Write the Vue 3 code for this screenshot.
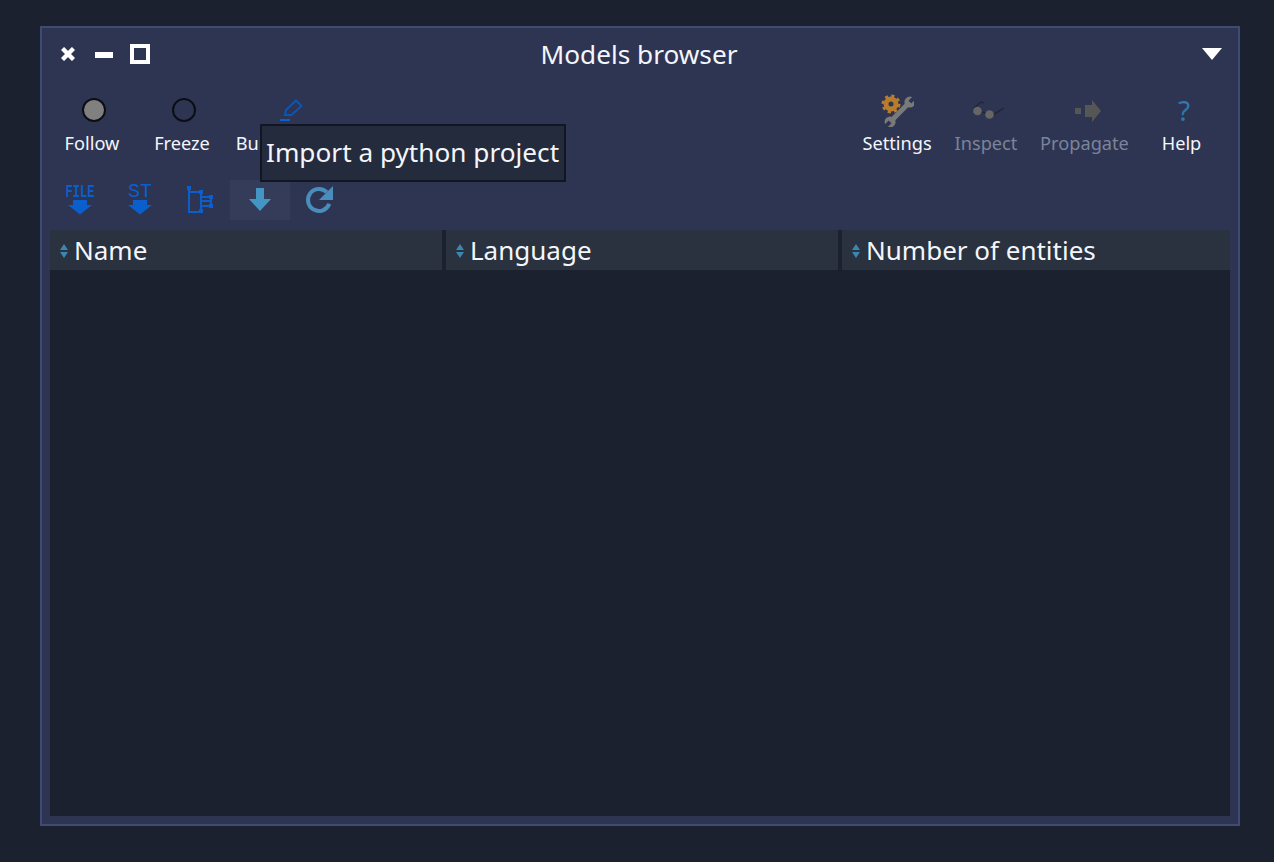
<script setup>
const columns = ['Name', 'Language', 'Number of entities']
</script>

<template>
  <div class="page">
    <section class="window">
      <header class="titlebar">
        <div class="win-controls">
          <svg class="ctl-close" width="14" height="14" viewBox="0 0 14 14"><path d="M1.5 1.5 L12.5 12.5 M12.5 1.5 L1.5 12.5" stroke="#fff" stroke-width="4.4" /></svg>
          <span class="ctl-min"></span>
          <span class="ctl-max"></span>
        </div>
        <h1 class="title">Models browser</h1>
        <span class="ctl-menu"></span>
      </header>

      <div class="toolbar">
        <div class="group">
          <button class="tool w90">
            <span class="ico"><span class="dot dot-grey"></span></span>
            <span class="lbl">Follow</span>
          </button>
          <button class="tool w90">
            <span class="ico"><span class="dot"></span></span>
            <span class="lbl">Freeze</span>
          </button>
          <button class="tool w128">
            <span class="ico pen">
              <svg width="24" height="24" viewBox="0 0 24 24" fill="none">
                <path d="M5 17 L6 12 L16 2.5 L21.5 8 L11.5 17 Z" stroke="#0b55b4" stroke-width="2" />
                <path d="M0 22 H10" stroke="#0a60cc" stroke-width="2" />
              </svg>
            </span>
            <span class="lbl lbl-build">Build model</span>
          </button>
        </div>
        <div class="group">
          <button class="tool w92">
            <span class="ico">
              <svg width="34" height="34" viewBox="0 0 34 34" fill="none">
                <g transform="rotate(-45 20 19)">
                  <rect x="6" y="16.5" width="28" height="5" fill="#7a7a7a" />
                  <circle cx="6" cy="19" r="5.5" fill="#7a7a7a" />
                  <circle cx="34" cy="19" r="5.5" fill="#7a7a7a" />
                  <rect x="0" y="17" width="6" height="4" fill="#2e3553" />
                  <rect x="34" y="17" width="7" height="4" fill="#2e3553" />
                </g>
                <circle cx="11" cy="11" r="5" stroke="#b97b2c" stroke-width="5" />
                <circle cx="11" cy="11" r="8" stroke="#b97b2c" stroke-width="3" stroke-dasharray="3.14 3.14" />
              </svg>
            </span>
            <span class="lbl">Settings</span>
          </button>
          <button class="tool w86 off">
            <span class="ico">
              <svg width="36" height="24" viewBox="0 0 36 24" fill="none">
                <path d="M6 10 L13 4 L16 5 M13 14 L18 15 M25 17 L36 10" stroke="#222836" stroke-width="1.5" />
                <circle cx="9.5" cy="13" r="4.3" fill="#666" />
                <circle cx="21.5" cy="16.5" r="4.3" fill="#666" />
              </svg>
            </span>
            <span class="lbl">Inspect</span>
          </button>
          <button class="tool w111 off">
            <span class="ico">
              <svg width="32" height="24" viewBox="0 0 32 24">
                <path d="M6 10 H12 V16 H6 Z M16 7 H23 V2 L32 13 L23 24 V19 H16 Z" fill="#565656" />
              </svg>
            </span>
            <span class="lbl">Propagate</span>
          </button>
          <button class="tool w83">
            <span class="ico q">?</span>
            <span class="lbl">Help</span>
          </button>
        </div>
      </div>

      <div class="actions">
        <button class="act">
          <svg class="over" width="34" height="34" viewBox="0 0 34 34">
            <text x="17" y="14" text-anchor="middle" class="ico-text" textLength="29" lengthAdjust="spacingAndGlyphs">FILE</text>
            <path d="M10 17 H24 V22 H29 L17 31.5 L5 22 H10 Z" fill="#0a5fcc" />
          </svg>
        </button>
        <button class="act">
          <svg class="over" width="34" height="34" viewBox="0 0 34 34">
            <text x="17" y="14" text-anchor="middle" class="ico-text thin" textLength="24" lengthAdjust="spacing">ST</text>
            <path d="M10 17 H24 V22 H29 L17 31.5 L5 22 H10 Z" fill="#0a5fcc" />
          </svg>
        </button>
        <button class="act">
          <svg width="30" height="30" viewBox="0 0 30 30" fill="none">
            <path d="M4 3 V27 H16 M4 7 H16 V26 M16 16 H26 M16 12 H26 V21 H16" stroke="#0a5fcc" stroke-width="2" />
            <path d="M2 1 H6 V5 H2 Z M14 5 H18 V9 H14 Z M14 24 H18 V28 H14 Z M24 10 H28 V14 H24 Z M24 19 H28 V23 H24 Z" fill="#0a5fcc" />
          </svg>
        </button>
        <button class="act hover">
          <svg width="24" height="26" viewBox="0 0 24 26">
            <path d="M8 1 H16 V12 H23 L12 24 L1 12 H8 Z" fill="#4396c4" />
          </svg>
        </button>
        <button class="act">
          <svg width="32" height="32" viewBox="0 0 32 32" fill="none">
            <path d="M22.8 8.2 A11 11 0 1 0 25.3 19.8" stroke="#4a8dbd" stroke-width="4" />
            <path d="M15 16 L29 2 V16 Z" fill="#4a8dbd" />
          </svg>
        </button>
      </div>

      <div class="table">
        <div class="thead">
          <div v-for="col in columns" :key="col" class="th">
            <span class="sort"><i class="up"></i><i class="down"></i></span>
            <span>{{ col }}</span>
          </div>
        </div>
      </div>

      <div class="tooltip">Import a python project</div>
    </section>
  </div>
</template>

<style>
html, body { margin: 0; background: #1b212f; }
</style>

<style scoped>
.page {
  width: 1274px;
  height: 862px;
  box-sizing: border-box;
  padding: 26px 34px 36px 40px;
  background: #1b212f;
  font-family: "Noto Sans", sans-serif;
  color: #f4f6fb;
}
.window {
  position: relative;
  height: 100%;
  box-sizing: border-box;
  border: 2px solid #3f4a75;
  background: #2e3553;
  padding: 0 8px 8px;
  display: flex;
  flex-direction: column;
}
.titlebar {
  height: 54px;
  flex: none;
  position: relative;
  display: flex;
  align-items: center;
  justify-content: space-between;
}
.win-controls { display: flex; align-items: center; margin-left: 11px; }
.ctl-close { display: block; margin-top: -2px; }
.ctl-min { width: 18px; height: 6px; background: #fff; margin-left: 20px; }
.ctl-max {
  width: 20px; height: 20px; box-sizing: border-box;
  border: 4px solid #fff; margin-left: 17px; margin-top: -2px;
}
.title {
  position: absolute;
  left: 0; right: 0; top: 0; margin: 0;
  line-height: 52px;
  text-align: center;
  font-size: 26.2px;
  font-weight: 400;
  transform: translateX(-1px);
}
.ctl-menu {
  width: 0; height: 0;
  border-left: 10px solid transparent;
  border-right: 10px solid transparent;
  border-top: 12px solid #fff;
  margin-right: 8px;
  margin-top: -2px;
}
.toolbar {
  height: 98px;
  flex: none;
  display: flex;
  justify-content: space-between;
  margin: 0 -3px;
}
.group { display: flex; }
.group:last-child { margin-right: 10px; }
button {
  font: inherit; color: inherit; background: none; border: 0; padding: 0; margin: 0;
}
.tool {
  display: flex;
  flex-direction: column;
  align-items: center;
  height: 80px;
  padding-top: 14px;
  box-sizing: border-box;
}
.w90 { width: 90px; }
.w128 { width: 128px; }
.w92 { width: 92px; }
.w86 { width: 86px; }
.w111 { width: 111px; }
.w83 { width: 83px; }
.ico {
  height: 28px; display: flex; align-items: center; justify-content: center;
}
.pen { margin-left: 2px; }
.lbl {
  font-size: 18.2px;
  line-height: 24px;
  margin-top: 7px;
  white-space: nowrap;
}
.lbl-build { margin-right: 8px; }
.off .lbl { color: #7b8499; }
.dot {
  width: 24px; height: 24px; box-sizing: border-box;
  border-radius: 50%;
  border: 2px solid #0c0e14;
  margin-left: 4px;
}
.dot-grey { background: #808080; }
.q { font-size: 28px; color: #2f78b0; margin-left: 5px; line-height: 28px; }
.actions { display: flex; height: 50px; flex: none; align-items: flex-start; }
.act {
  width: 60px; height: 40px;
  display: flex; align-items: center; justify-content: center;
}
.act.hover { background: #343c59; }
.over { overflow: visible; }
.ico-text { font-family: "Liberation Mono", monospace; font-size: 19px; fill: #0a5fcc; font-weight: 700; }
.ico-text.thin { font-weight: 400; font-size: 20px; }
.table {
  flex: 1;
  background: #1b212f;
}
.thead {
  display: grid;
  grid-template-columns: 392px 392px 1fr;
  column-gap: 4px;
}
.th {
  height: 40px;
  background: #2a3240;
  display: flex;
  align-items: center;
  font-size: 26px;
  padding-left: 10px;
  box-sizing: border-box;
}
.sort {
  display: flex; flex-direction: column; gap: 2px;
  width: 14px; flex: none;
  margin-top: 1px;
}
.sort i { width: 0; height: 0; border-left: 4.5px solid transparent; border-right: 4.5px solid transparent; }
.sort .up { border-bottom: 6px solid #3d86b0; }
.sort .down { border-top: 6px solid #3d86b0; }
.tooltip {
  position: absolute;
  left: 218px;
  top: 96px;
  width: 306px;
  height: 58px;
  box-sizing: border-box;
  border: 2px solid #111722;
  background: #232b3d;
  font-size: 26.2px;
  line-height: 52px;
  padding-left: 4px;
  white-space: nowrap;
}
</style>
